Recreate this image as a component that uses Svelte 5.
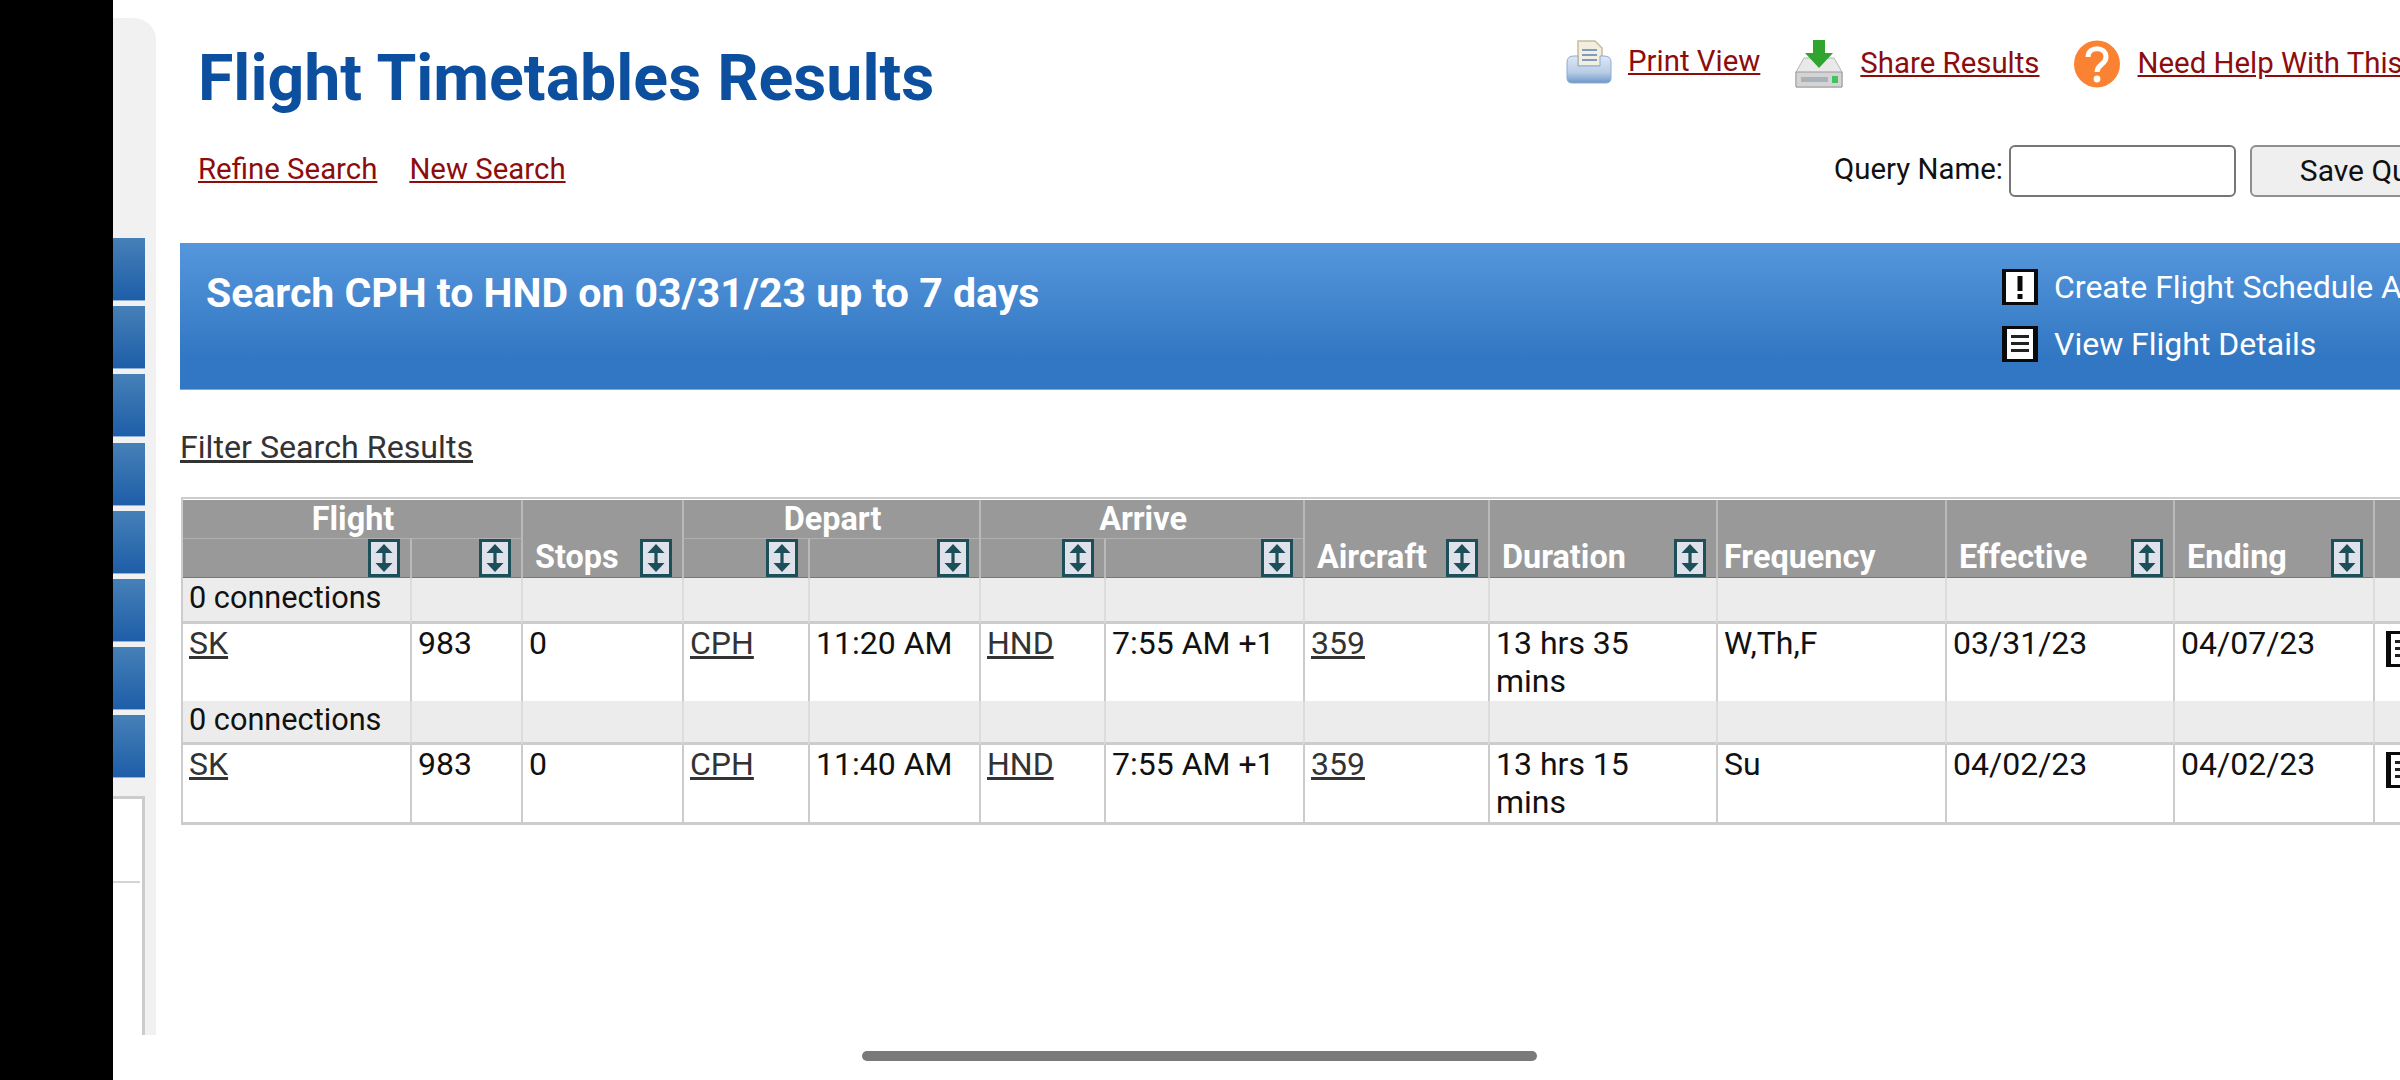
<script>
  const navItems = [1, 2, 3, 4, 5, 6, 7, 8];
  const rows = [
    { time: '11:20 AM', dur: '13 hrs 35', freq: 'W,Th,F', eff: '03/31/23', end: '04/07/23' },
    { time: '11:40 AM', dur: '13 hrs 15', freq: 'Su', eff: '04/02/23', end: '04/02/23' }
  ];
</script>

{#snippet sort()}
  <svg class="sort" width="32" height="38" viewBox="0 0 32 38" aria-hidden="true">
    <rect x="1.5" y="1.5" width="29" height="35" fill="#dfe2ea" stroke="#1c4f58" stroke-width="3" />
    <path d="M16 5 L24.5 14 H17.6 V24 H24.5 L16 33 L7.5 24 H14.4 V14 H7.5 Z" fill="#1c4f58" />
  </svg>
{/snippet}

{#snippet doc(cls)}
  <svg class={cls} width="36" height="36" viewBox="0 0 36 36" aria-hidden="true">
    <rect x="0" y="0" width="36" height="36" fill="#0a0a0a" />
    <rect x="5" y="3" width="26" height="30" fill="#fff" />
    <path d="M9 10.5H27M9 17.5H27M9 24.5H27" stroke="#222" stroke-width="3.2" />
  </svg>
{/snippet}

<div class="page">
  <div class="blackbar"></div>

  <aside class="side">
    <div class="navlist">
      {#each navItems as n (n)}
        <div class="navbtn"></div>
      {/each}
    </div>
    <div class="sidebox"><div class="sidebox-line"></div></div>
  </aside>

  <main class="main">
    <header class="head">
      <div class="head-left">
        <h1>Flight Timetables Results</h1>
        <nav class="sublinks">
          <a href="#r">Refine Search</a>
          <a href="#n">New Search</a>
        </nav>
      </div>
      <div class="head-right">
        <div class="tools">
          <span class="tool tool-print">
            <svg width="46" height="44" viewBox="0 0 46 44" aria-hidden="true">
              <defs>
                <linearGradient id="pb" x1="0" y1="0" x2="0" y2="1">
                  <stop offset="0" stop-color="#dfe8f4" />
                  <stop offset="0.6" stop-color="#b9cde6" />
                  <stop offset="1" stop-color="#6f97c9" />
                </linearGradient>
              </defs>
              <path d="M12 1H29L36 8V26H12Z" fill="#f2eee0" stroke="#c9bd97" stroke-width="1.5" />
              <path d="M16 10H31M16 15H31M16 20H31" stroke="#7f9bc0" stroke-width="2" />
              <path d="M8 16H12V26H34V16H38Q45 16 45 22V38Q45 43 40 43H6Q1 43 1 38V22Q1 16 8 16Z" fill="url(#pb)" stroke="#8dabd0" />
            </svg>
          </span>
          <a href="#p" class="tl-print">Print View</a>
          <span class="tool tool-share">
            <svg width="48" height="48" viewBox="0 0 48 48" aria-hidden="true">
              <path d="M9 18H39L47 32V47H1V32Z" fill="#e9e9e9" stroke="#b5b5b5" />
              <path d="M1 32H47V47H1Z" fill="#d4d4d4" stroke="#999" />
              <rect x="6" y="37" width="27" height="5" fill="#a9b1bd" />
              <rect x="37" y="36" width="6" height="7" fill="#45c25a" />
              <path d="M18 0H30V13H38L24 28L10 13H18Z" fill="#2fa52f" />
            </svg>
          </span>
          <a href="#s" class="tl-share">Share Results</a>
          <span class="tool tool-help">
            <svg width="48" height="48" viewBox="0 0 48 48" aria-hidden="true">
              <ellipse cx="24" cy="24" rx="23" ry="23.5" fill="#fb8232" />
              <path d="M15 17C15 6 33 6 33 17C33 25 24 24 24 32" fill="none" stroke="#fff" stroke-width="5" />
              <circle cx="24" cy="39" r="3.4" fill="#fff" />
            </svg>
          </span>
          <a href="#h" class="tl-help">Need Help With This Page?</a>
        </div>
        <form class="query">
          <label for="qn">Query Name:</label>
          <input id="qn" type="text" />
          <button type="button">Save Query</button>
        </form>
      </div>
    </header>

    <section class="banner">
      <h2>Search CPH to HND on 03/31/23 up to 7 days</h2>
      <div class="actions">
        <div class="action">
          <svg width="36" height="36" viewBox="0 0 36 36" aria-hidden="true">
            <rect x="0" y="0" width="36" height="36" fill="#0a0a0a" />
            <rect x="4" y="3" width="28" height="30" fill="#fff" />
            <path d="M18 7V22" stroke="#0a0a0a" stroke-width="5" />
            <rect x="15.5" y="25" width="5" height="5" fill="#0a0a0a" />
          </svg>
          <span>Create Flight Schedule Alert</span>
        </div>
        <div class="action">
          {@render doc('')}
          <span>View Flight Details</span>
        </div>
      </div>
    </section>

    <a href="#f" class="filter">Filter Search Results</a>

    <div class="tablewrap">
      <table>
        <colgroup>
          <col class="c1" /><col class="c2" /><col class="c3" /><col class="c4" /><col class="c5" /><col class="c6" /><col class="c7" /><col class="c8" /><col class="c9" /><col class="c10" /><col class="c11" /><col class="c12" /><col class="c13" />
        </colgroup>
        <thead>
          <tr class="h1row">
            <th colspan="2">Flight</th>
            <th rowspan="2" class="lab"><div class="thin"><span>Stops</span>{@render sort()}</div></th>
            <th colspan="2">Depart</th>
            <th colspan="2">Arrive</th>
            <th rowspan="2" class="lab"><div class="thin"><span>Aircraft</span>{@render sort()}</div></th>
            <th rowspan="2" class="lab"><div class="thin"><span>Duration</span>{@render sort()}</div></th>
            <th rowspan="2" class="lab freq"><div class="thin"><span>Frequency</span></div></th>
            <th rowspan="2" class="lab"><div class="thin"><span>Effective</span>{@render sort()}</div></th>
            <th rowspan="2" class="lab"><div class="thin"><span>Ending</span>{@render sort()}</div></th>
            <th rowspan="2" class="lab"></th>
          </tr>
          <tr class="h2row">
            <th><div class="thin end">{@render sort()}</div></th>
            <th><div class="thin end">{@render sort()}</div></th>
            <th><div class="thin end">{@render sort()}</div></th>
            <th><div class="thin end">{@render sort()}</div></th>
            <th><div class="thin end">{@render sort()}</div></th>
            <th><div class="thin end">{@render sort()}</div></th>
          </tr>
        </thead>
        <tbody>
          {#each rows as r, i (i)}
            <tr class="conn" class:second={i === 1}>
              <td>0 connections</td><td></td><td></td><td></td><td></td><td></td><td></td><td></td><td></td><td></td><td></td><td></td><td></td>
            </tr>
            <tr class="data">
              <td><a href="#a">SK</a></td>
              <td>983</td>
              <td>0</td>
              <td><a href="#a">CPH</a></td>
              <td>{r.time}</td>
              <td><a href="#a">HND</a></td>
              <td>7:55 AM +1</td>
              <td><a href="#a">359</a></td>
              <td>{r.dur}<br />mins</td>
              <td>{r.freq}</td>
              <td>{r.eff}</td>
              <td>{r.end}</td>
              <td>{@render doc('rowdoc')}</td>
            </tr>
          {/each}
        </tbody>
      </table>
    </div>
  </main>

  <div class="pill"></div>
</div>

<style>
  :global(body) { margin: 0; background: #fff; }
  .page {
    display: flex;
    width: 2400px;
    height: 1080px;
    overflow: hidden;
    position: relative;
    background: #fff;
    font-family: Roboto, "Liberation Sans", sans-serif;
    font-size: 32px;
    line-height: 38px;
    color: #111;
  }
  .blackbar { flex: 0 0 113px; background: #000; }

  .side {
    flex: 0 0 43px;
    height: 1017px;
    margin-top: 18px;
    background: #f1f1f1;
    border-top-right-radius: 22px;
    display: flex;
    flex-direction: column;
    padding-top: 220px;
    box-sizing: border-box;
  }
  .navlist { display: flex; flex-direction: column; gap: 5.2px; width: 32px; }
  .navbtn {
    height: 63px;
    background: linear-gradient(#4680b8, #1e5ea8);
    border-bottom: 1px solid #8fb3da;
    box-sizing: border-box;
  }
  .sidebox {
    margin-top: 18px;
    width: 32px;
    flex: 1;
    background: #fff;
    border-top: 3px solid #ccc;
    border-right: 3px solid #ccc;
    box-sizing: border-box;
    padding-top: 82px;
  }
  .sidebox-line { height: 2px; background: #d4d4d4; margin-right: 2px; }

  .main { flex: 1; min-width: 0; padding-left: 24px; overflow: hidden; }

  .head { display: flex; height: 243px; padding-left: 18px; box-sizing: border-box; width: 2220px; font-size: 29.4px; }
  .head-left { flex: 0 0 1368px; }
  h1 {
    margin: 0;
    padding-top: 40px;
    font-size: 64.4px;
    line-height: 76px;
    font-weight: 700;
    color: #0b4f9e;
  }
  .sublinks { display: flex; gap: 32px; margin-top: 34px; }
  a { color: #333; }
  .sublinks a, .tools a { color: #8d0d0d; }

  .head-right { flex: none; white-space: nowrap; }
  .tools { display: flex; height: 48px; margin-top: 40px; align-items: flex-start; }
  .tool { display: block; height: 48px; }
  .tool svg { display: block; filter: blur(0.5px); }
  .tool-print { width: 46px; margin-right: 16px; }
  .tl-print { margin-right: 35px; margin-top: 2px; }
  .tool-share { width: 48px; margin-right: 17px; }
  .tl-share { margin-right: 33px; margin-top: 4px; }
  .tool-help { width: 48px; margin-right: 17px; }
  .tl-help { margin-top: 4px; }

  .query { display: flex; margin-top: 57px; margin-left: 268px; align-items: center; height: 52px; }
  .query label { color: #111; margin-right: 6px; margin-top: -4px; }
  .query input {
    width: 227px;
    height: 52px;
    box-sizing: border-box;
    border: 2px solid #767676;
    border-radius: 6px;
    margin: 0 14px 0 0;
    padding: 0;
  }
  .query button {
    width: 240px;
    height: 52px;
    box-sizing: border-box;
    border: 2px solid #8f8f8f;
    border-radius: 6px;
    background: #efefef;
    font: inherit;
    font-size: 30px;
    color: #111;
    text-align: left;
    padding: 0 0 0 48px;
  }

  .banner {
    display: flex;
    width: 2220px;
    height: 147px;
    box-sizing: border-box;
    padding-left: 26px;
    background: linear-gradient(#5597dc, #3277c3 78%);
    color: #fff;
    border-bottom: 1px solid #7da6d4;
  }
  h2 {
    flex: 0 0 1796px;
    margin: 0;
    padding-top: 27px;
    font-size: 41px;
    line-height: 46px;
    font-weight: 700;
  }
  .actions { padding-top: 26px; white-space: nowrap; display: flex; flex-direction: column; gap: 21px; }
  .action { display: flex; align-items: center; gap: 16px; height: 36px; }
  .action svg { flex: none; display: block; filter: blur(0.4px); }

  .filter { display: inline-block; margin-top: 38px; color: #333; font-size: 32.2px; }

  .tablewrap {
    margin-top: 31px;
    margin-left: 1px;
    width: 2400px;
    border-top: 2px solid #ccc;
    border-bottom: 3px solid #ccc;
    border-left: 2px solid #ccc;
    padding-top: 1px;
  }
  table { border-collapse: separate; border-spacing: 0; table-layout: fixed; width: 2250px; }
  .c1 { width: 227px; } .c2 { width: 111px; } .c3 { width: 161px; } .c4 { width: 126px; }
  .c5 { width: 171px; } .c6 { width: 125px; } .c7 { width: 199px; } .c8 { width: 185px; }
  .c9 { width: 228px; } .c10 { width: 229px; } .c11 { width: 228px; } .c12 { width: 200px; } .c13 { width: 60px; }

  th {
    background: #999;
    color: #fff;
    font-weight: 700;
    font-size: 32.4px;
    padding: 0;
    border-left: 2px solid #b9b9b9;
    vertical-align: bottom;
  }
  th:first-child { border-left: none; }
  .h1row th { height: 38px; }
  .h1row th[colspan] { border-bottom: 1px solid #b0b0b0; padding-left: 2px; }
  .h2row th { height: 39px; }
  thead th { box-sizing: border-box; }
  .h2row th:nth-child(1) { border-left: none; }
  .h2row th { padding-left: 0; }
  .thin {
    display: flex;
    justify-content: space-between;
    align-items: center;
    height: 38px;
    padding: 0 10px 0 12px;
    border-bottom: 1px solid #777;
  }
  .thin span { margin-top: -2px; }
  .thin.end { justify-content: flex-end; }
  .freq .thin { padding-left: 6px; }
  .sort { display: block; flex: none; }
  .lab { border-bottom: 0; }

  td {
    padding: 0 8px 0 6px;
    vertical-align: top;
    border-left: 2px solid #ccc;
    white-space: nowrap;
  }
  td:first-child { border-left: none; }
  .conn td {
    background: #ececec;
    height: 46px;
    padding-top: 1px;
    box-sizing: border-box;
    border-left-color: #dcdcdc;
    border-bottom: 3px solid #ccc;
    font-size: 30.7px;
  }
  .conn.second td { height: 44px; padding-top: 0; }
  .data td { height: 77px; box-sizing: border-box; background: #fff; }
  .rowdoc { display: block; margin: 7px 0 0 5px; }

  .pill {
    position: absolute;
    left: 862px;
    top: 1051px;
    width: 675px;
    height: 10px;
    border-radius: 5px;
    background: #7a7a7a;
  }
</style>
